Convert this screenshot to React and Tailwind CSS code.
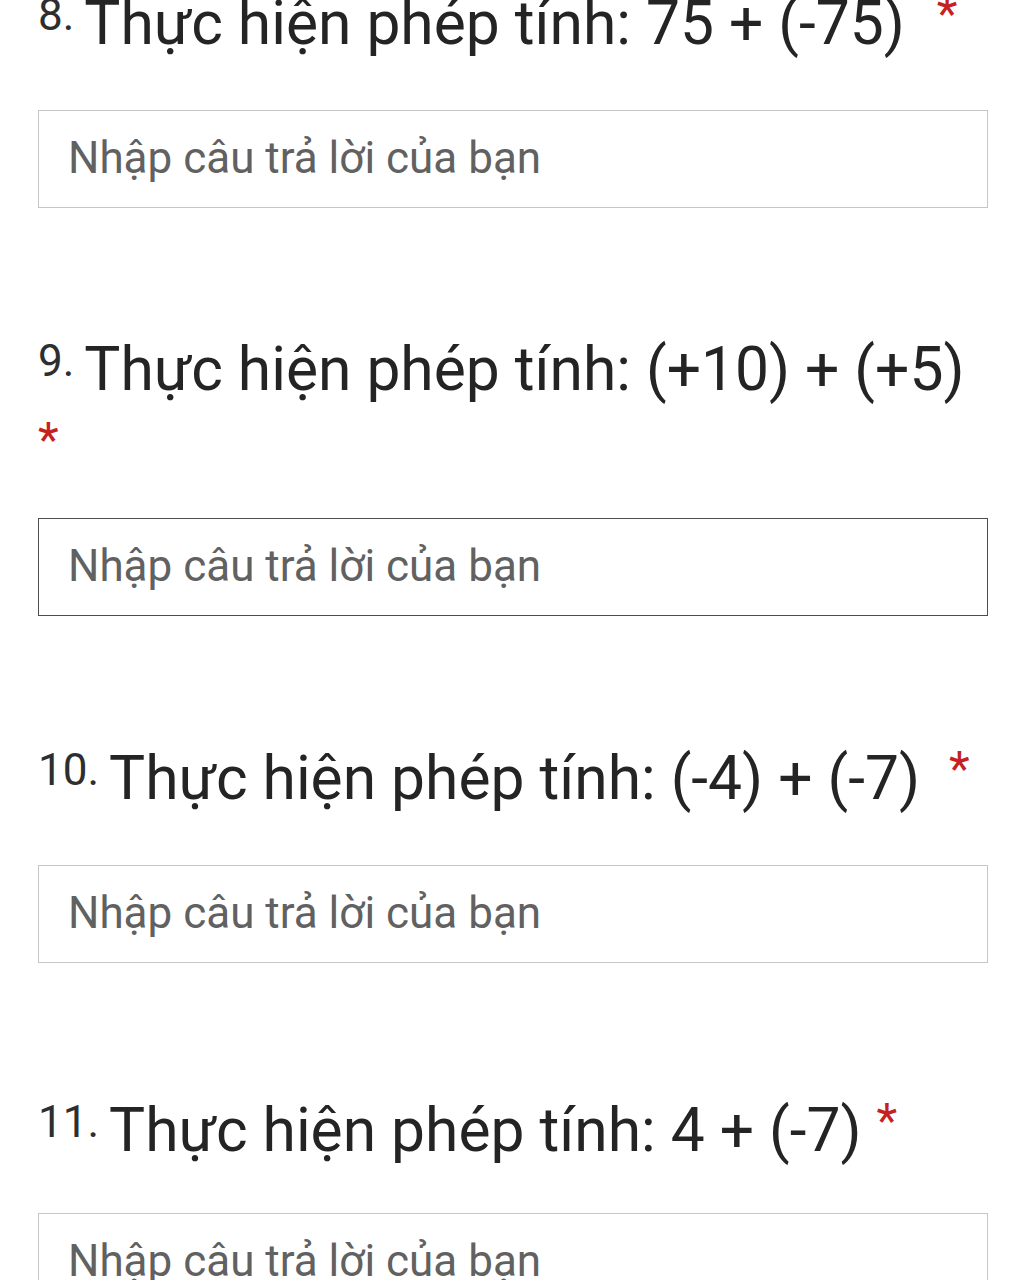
const qs = [
  { n: "8.", t: "Thực hiện phép tính: 75 + (-75)", star: "ml-[32px]", sp: false, wrap: "-mt-[16px]", box: "mt-[46px]", border: "border-[#c6c6c6]" },
  { n: "9.", t: "Thực hiện phép tính: (+10) + (+5)", star: "ml-0", sp: true, wrap: "mt-[122px]", box: "mt-[28px]", border: "border-[#4d4d4d]" },
  { n: "10.", t: "Thực hiện phép tính: (-4) + (-7)", star: "ml-[29px]", sp: false, wrap: "mt-[123px]", box: "mt-[46px]", border: "border-[#c6c6c6]" },
  { n: "11.", t: "Thực hiện phép tính: 4 + (-7)", star: "ml-[15px]", sp: false, wrap: "mt-[128px]", box: "mt-[42px]", border: "border-[#c6c6c6]" },
];

export default function App() {
  return (
    <div
      className="w-[1024px] h-[1280px] overflow-hidden bg-white"
      style={{ fontFamily: "Roboto, 'Noto Sans', sans-serif" }}
    >
      <div className="pl-[38px] pr-[36px]">
        {qs.map((q, i) => (
          <div key={i} className={q.wrap}>
            <div className="text-[60.5px] leading-[80px] text-[#242424]">
              <span className="text-[44px] align-top relative top-[-9px] mr-[10px] text-[#2e2e2e]">{q.n}</span>
              {q.t}
              {q.sp ? " " : ""}
              <span className={`${q.star} text-[48px] align-top relative top-[-10px] text-[#c5221f]`}>*</span>
            </div>
            <div className={`${q.box} h-[98px] border ${q.border} flex items-center pl-[29px] pb-[3px]`}>
              <span className="text-[44px] text-[#616161]">Nhập câu trả lời của bạn</span>
            </div>
          </div>
        ))}
      </div>
    </div>
  );
}
